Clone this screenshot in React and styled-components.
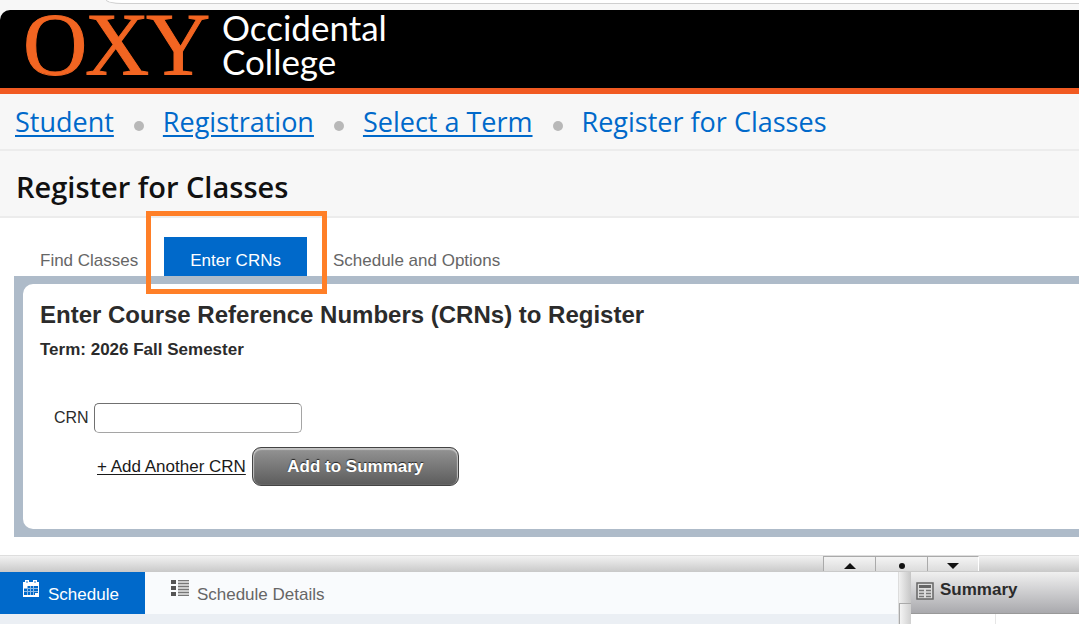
import React, { useState } from 'react';
import styled, { createGlobalStyle } from 'styled-components';

const GlobalStyle = createGlobalStyle`
  * {
    box-sizing: border-box;
  }

  body {
    margin: 0;
    background: #fff;
    font-family: 'Liberation Sans', Arial, sans-serif;
    font-size: 17px;
    color: #2b2b2b;
  }
`

const Page = styled.div`
  display: flex;
  flex-direction: column;
  height: 100vh;
  overflow: hidden;
`

const BrowserEdge = styled.div`
  flex: none;
  height: 10px;
  padding-left: 106px;
  background: #f7f7f7;
`

const AddressBar = styled.div`
  height: 4px;
  background: #fff;
  border: 1px solid #cfcfcf;
  border-width: 0 0 1px 1px;
  border-bottom-left-radius: 16px 4px;
`

const HeaderBack = styled.div`
  flex: none;
  background: #f7f7f7;
`

const Header = styled.header`
  height: 84px;
  padding-left: 20px;
  background: #000;
  border-bottom: 6px solid #f15a22;
  border-top-left-radius: 10px;
`

const LogoSvg = styled.svg`
  display: block;
  overflow: visible;

  .letters {
    font-family: 'Liberation Serif', serif;
    font-size: 89px;
    fill: #f26522;
    stroke: #f26522;
    stroke-width: 1px;
  }

  .name {
    font-family: Lato, sans-serif;
    font-size: 35px;
    fill: #fff;
  }
`

const Breadcrumbs = styled.nav`
  display: flex;
  flex: none;
  align-items: center;
  height: 57px;
  padding-left: 15px;
  background: #f7f7f7;
  border-bottom: 2px solid #ececec;
  font-family: 'Open Sans', sans-serif;
  font-size: 27px;
  color: #0069ca;

  a {
    color: inherit;
    text-decoration-thickness: 2px;
    text-underline-offset: 3px;
  }
`

const Dot = styled.span`
  width: 10px;
  height: 10px;
  margin: 8px 19px 0 20px;
  border-radius: 50%;
  background: #b8b8b8;
`

const PageTitle = styled.h1`
  flex: none;
  height: 67px;
  margin: 0;
  padding-left: 16px;
  background: #f7f7f7;
  border-bottom: 2px solid #ececec;
  font-family: 'Open Sans', sans-serif;
  font-size: 29px;
  font-weight: 600;
  line-height: 71px;
  color: #111;
`

const Tabs = styled.div`
  display: flex;
  flex: none;
  align-items: flex-end;
  height: 58px;
  padding-left: 14px;
`

const Tab = styled.button`
  position: relative;
  height: 39px;
  padding: 8px 26px 0;
  border: 0;
  background: ${props => props.$active ? '#0069ca' : 'transparent'};
  color: ${props => props.$active ? '#fff' : '#666'};
  font: inherit;
  white-space: nowrap;
`

// frame drawn over the tab to point it out
const Highlight = styled.span`
  position: absolute;
  z-index: 2;
  top: -26px;
  right: -20px;
  bottom: -18px;
  left: -18px;
  border: 5px solid #ff7f27;
  pointer-events: none;
`

const PanelFrame = styled.div`
  flex: none;
  margin-left: 14px;
  padding: 8px 0 8px 9px;
  background: #aebbc9;
`

const Panel = styled.form`
  height: 245px;
  padding: 16px 17px;
  background: #fff;
  border-radius: 10px 0 0 10px;
`

const PanelTitle = styled.h2`
  margin: 0;
  font-size: 24px;
  line-height: 30px;
`

const Term = styled.h3`
  margin: 10px 0 0;
  font-size: 17px;
  line-height: 20px;
`

const CrnRow = styled.div`
  display: flex;
  align-items: center;
  gap: 5px;
  margin-top: 43px;
  padding-left: 14px;
`

const CrnLabel = styled.label`
  font-size: 16px;
`

const CrnInput = styled.input`
  width: 208px;
  height: 30px;
  padding: 0 8px;
  border: 1px solid #a5a5a5;
  border-top-color: #707070;
  border-left-color: #707070;
  border-radius: 5px;
  font: inherit;
`

const Actions = styled.div`
  display: flex;
  align-items: center;
  gap: 6px;
  margin-top: 14px;
  padding-left: 57px;
`

const AddLink = styled.a`
  color: #1a1a1a;
  text-underline-offset: 2px;
`

const SubmitButton = styled.button`
  width: 207px;
  height: 39px;
  border: 1px solid #444;
  border-radius: 9px;
  background: linear-gradient(#949494, #5c5c5c);
  box-shadow: inset 0 1px 1px 1px #c4c4c4;
  color: #fff;
  font: inherit;
  font-weight: bold;
  text-shadow: 0 -1px 1px #222;
`

const Splitter = styled.div`
  display: flex;
  flex: none;
  justify-content: flex-end;
  height: 17px;
  margin-top: 18px;
  padding-right: 100px;
  background: linear-gradient(#f2f2f2, #c9c9c9);
  border-top: 1px solid #dedede;
`

const SplitterButton = styled.button`
  display: flex;
  align-items: flex-end;
  justify-content: center;
  width: 52px;
  height: 15px;
  padding: 0 0 1px;
  border: 1px solid #aaa;
  border-width: 1px 0 0 1px;
  background: linear-gradient(#f4f4f4, #dcdcdc);

  &:last-child {
    border-right-width: 1px;
    border-right-color: #fff;
  }
`

const Bottom = styled.div`
  display: flex;
  flex: 1;
  min-height: 52px;
`

const SchedulePane = styled.section`
  flex: 1;
  background: #ebeff4;
`

const ScheduleTabs = styled.div`
  display: flex;
  height: 42px;
  background: #f9fbfd;
`

const ScheduleTab = styled.button`
  display: flex;
  gap: 8px;
  padding: 7px 26px 0 ${props => props.$active ? 22 : 26}px;
  border: 0;
  background: ${props => props.$active ? '#0069ca' : 'transparent'};
  color: ${props => props.$active ? '#fff' : '#666'};
  font: inherit;
  line-height: 32px;
`

const SideSplitter = styled.div`
  flex: none;
  width: 13px;
  padding-top: 31px;
  background: linear-gradient(to right, #f0f0f0, #c6c6c6);
  border-left: 1px solid #ddd;
`

const SideHandle = styled.div`
  height: 100%;
  border: 1px solid #aaa;
  border-width: 1px 0 0 1px;
  background: linear-gradient(to right, #f4f4f4, #d0d0d0);
`

const SummaryPane = styled.section`
  flex: none;
  width: 168px;
`

const SummaryTitle = styled.h3`
  display: flex;
  gap: 6px;
  height: 42px;
  margin: 0;
  padding: 8px 0 0 5px;
  background: linear-gradient(#f0f0f0, #a9a9ad);
  border-bottom: 1px solid #999;
  font-size: 17px;
  line-height: 20px;

  svg {
    margin-top: 2px;
  }
`

const SummaryColumns = styled.div`
  display: grid;
  grid-template-columns: 85px 1fr;
  height: 10px;

  span:first-child {
    border-right: 1px solid #e6e6e6;
  }
`

const Logo = () => (
  <LogoSvg width='380' height='78' viewBox='0 0 380 78'>
    <text className='letters' y='64'>
      <tspan x='3'>O</tspan>
      <tspan x='65'>X</tspan>
      <tspan x='126'>Y</tspan>
    </text>
    <text className='name'>
      <tspan x='202' y='31'>Occidental</tspan>
      <tspan x='202' y='65'>College</tspan>
    </text>
  </LogoSvg>
);

const CalendarIcon = () => (
  <svg width='18' height='19' viewBox='0 0 18 19' aria-hidden='true'>
    <path d='M1 3h2V1h4v2h4V1h4v2h2v15H1z' fill='#fff' />
    <path d='M4 2h2v2H4zM12 2h2v2h-2z' fill='#8dbbe6' />
    <path d='M2 7h14v9H2z' fill='#0069ca' />
    <path d='M5.5 7v9M8.5 7v9M11.5 7v9M2 9.5h14M2 12.5h14' stroke='#8dbbe6' strokeWidth='1' />
    <path d='M2 7h3v2H2zM13 14h3v2h-3z' fill='#fff' />
  </svg>
);

const ListIcon = () => (
  <svg width='18' height='18' viewBox='0 0 18 18' aria-hidden='true'>
    <path d='M0 1h5v4H0zM0 7h5v4H0zM0 13h5v4H0z' fill='#555' />
    <path d='M7 1h11v16H7z' fill='#ccc' />
    <path d='M7 1.5h11M7 4.5h11M7 7.5h11M7 10.5h11M7 13.5h11M7 16.5h11' stroke='#777' strokeWidth='1' />
  </svg>
);

const SummaryIcon = () => (
  <svg width='18' height='18' viewBox='0 0 18 18' aria-hidden='true'>
    <path d='M1 1h16v16H1z' fill='#ddd' stroke='#666' strokeWidth='1.5' />
    <path d='M3 3h12v3H3z' fill='#666' />
    <path d='M3 8.5h5M3 11.5h5M3 14.5h5M10 8.5h5M10 11.5h5M10 14.5h5' stroke='#777' strokeWidth='1.5' />
  </svg>
);

const tabs = ['Find Classes', 'Enter CRNs', 'Schedule and Options'];

const splitterShapes = [
  { name: 'Collapse top', path: 'M0 7L6 1L12 7z' },
  { name: 'Reset panels', path: 'M3 4a3 3 0 1 0 6 0a3 3 0 1 0-6 0z' },
  { name: 'Collapse bottom', path: 'M0 1h12L6 7z' }
];

function App() {
  const [crn, setCrn] = useState('');

  return (
    <Page>
      <GlobalStyle />
      <BrowserEdge><AddressBar /></BrowserEdge>
      <HeaderBack>
        <Header><Logo /></Header>
      </HeaderBack>
      <Breadcrumbs>
        <a href='#student'>Student</a>
        <Dot />
        <a href='#registration'>Registration</a>
        <Dot />
        <a href='#term'>Select a Term</a>
        <Dot />
        <span>Register for Classes</span>
      </Breadcrumbs>
      <PageTitle>Register for Classes</PageTitle>
      <Tabs>
        {tabs.map(tab => (
          <Tab key={tab} type='button' $active={tab === 'Enter CRNs'}>
            {tab}
            {tab === 'Enter CRNs' ? <Highlight /> : null}
          </Tab>
        ))}
      </Tabs>
      <PanelFrame>
        <Panel onSubmit={e => e.preventDefault()}>
          <PanelTitle>Enter Course Reference Numbers (CRNs) to Register</PanelTitle>
          <Term>Term: 2026 Fall Semester</Term>
          <CrnRow>
            <CrnLabel htmlFor='crn'>CRN</CrnLabel>
            <CrnInput
              id='crn'
              name='crn'
              type='text'
              value={crn}
              onChange={e => setCrn(e.target.value)}
            />
          </CrnRow>
          <Actions>
            <AddLink href='#add'>+ Add Another CRN</AddLink>
            <SubmitButton type='submit'>Add to Summary</SubmitButton>
          </Actions>
        </Panel>
      </PanelFrame>
      <Splitter>
        {splitterShapes.map(({ name, path }) => (
          <SplitterButton key={name} type='button' aria-label={name}>
            <svg width='12' height='8' viewBox='0 0 12 8'><path d={path} fill='#111' /></svg>
          </SplitterButton>
        ))}
      </Splitter>
      <Bottom>
        <SchedulePane>
          <ScheduleTabs>
            <ScheduleTab type='button' $active><CalendarIcon />Schedule</ScheduleTab>
            <ScheduleTab type='button'><ListIcon />Schedule Details</ScheduleTab>
          </ScheduleTabs>
        </SchedulePane>
        <SideSplitter><SideHandle /></SideSplitter>
        <SummaryPane>
          <SummaryTitle><SummaryIcon />Summary</SummaryTitle>
          <SummaryColumns><span /><span /></SummaryColumns>
        </SummaryPane>
      </Bottom>
    </Page>
  );
}

export default App;
